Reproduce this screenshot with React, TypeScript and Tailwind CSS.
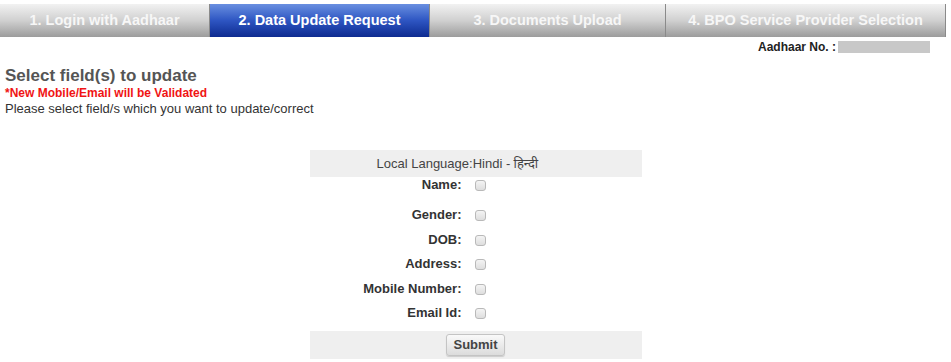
const tabs = [
  { label: '1. Login with Aadhaar', w: 'w-[210px]', active: false },
  { label: '2. Data Update Request', w: 'w-[220px]', active: true },
  { label: '3. Documents Upload', w: 'w-[236px]', active: false },
  { label: '4. BPO Service Provider Selection', w: 'w-[280px]', active: false },
]

const fields = [
  { label: 'Name:', mt: 'mt-0' },
  { label: 'Gender:', mt: 'mt-[14px]' },
  { label: 'DOB:', mt: 'mt-[9px]' },
  { label: 'Address:', mt: 'mt-[8px]' },
  { label: 'Mobile Number:', mt: 'mt-[9px]' },
  { label: 'Email Id:', mt: 'mt-[8px]' },
]

const Checkbox = () => (
  <span className="inline-block h-[11px] w-[11px] rounded-[3px] border border-[#b9b9b9] bg-gradient-to-b from-[#f4f4f4] to-[#dedede]" />
)

export default function App() {
  return (
    <div className="h-[362px] w-[951px] bg-white font-['Liberation_Sans',Arial,sans-serif]">
      <div className="pt-1">
        <div className="flex h-[33px] w-[946px] bg-gradient-to-b from-[#f2f2f2] via-[#d0d0d0] to-[#9c9c9c]">
          {tabs.map((t) => (
            <div
              key={t.label}
              className={`${t.w} flex items-center justify-center whitespace-nowrap border-r border-[#8a8a8a] text-[14.5px] font-bold ${
                t.active
                  ? 'bg-gradient-to-b from-[#6a8fe0] via-[#2e55c2] to-[#0e2b90] text-white'
                  : 'text-[#f7f7f7]'
              }`}
            >
              {t.label}
            </div>
          ))}
        </div>
      </div>

      <div className="flex h-[19px] items-center justify-end whitespace-nowrap pr-[21px] pt-[1px] text-[12px] font-bold text-[#222]">
        <span>Aadhaar No. :</span>
        <span className="ml-[2px] inline-block h-[12px] w-[92px] bg-[#c8c8c8]" />
      </div>

      <div className="pl-[5px] pt-[11px]">
        <div className="text-[17px] font-bold leading-[18px] text-[#555]">Select field(s) to update</div>
        <div className="text-[12px] font-bold leading-[16px] text-[#f01414]">*New Mobile/Email will be Validated</div>
        <div className="text-[13px] leading-[16px] text-[#333]">Please select field/s which you want to update/correct</div>
      </div>

      <div className="mx-auto mt-[33px] w-[332px] text-[13px]">
        <div className="flex h-[27px] items-center bg-[#efefef] pl-[67px] text-[#444]">
          Local Language:Hindi - <span className="font-['Noto_Sans','Noto_Sans_Devanagari',sans-serif]">&nbsp;हिन्दी</span>
        </div>
        {fields.map((f) => (
          <div key={f.label} className={`flex h-[16px] items-center ${f.mt}`}>
            <div className="w-[152px] text-right font-bold text-[#333]">{f.label}</div>
            <div className="ml-[13px] flex items-center">
              <Checkbox />
            </div>
          </div>
        ))}
        <div className="mt-[10px] flex h-[28px] items-center justify-center bg-[#efefef]">
          <button className="h-[22px] rounded-[3px] border border-[#c4c4c4] bg-gradient-to-b from-[#fafafa] to-[#dcdcdc] px-[6px] text-[13px] font-bold text-[#444] shadow-[0_1px_1px_rgba(0,0,0,0.15)]">
            Submit
          </button>
        </div>
      </div>
    </div>
  )
}
